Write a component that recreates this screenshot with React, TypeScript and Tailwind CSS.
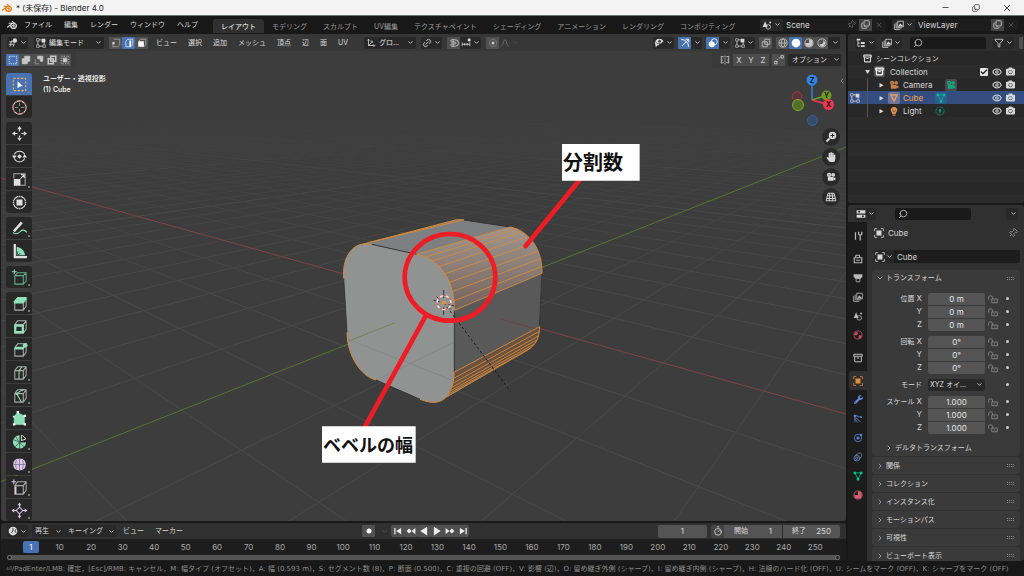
import type { ReactNode } from "react";
import {
  Archive, Check, ChevronDown, ChevronLeft, ChevronRight, Copy, Eye, Funnel, Link2,
  Magnet, Minus, Pin, Search, Timer, X,
} from "lucide-react";
import { FaCamera, FaHandPaper, FaWrench } from "react-icons/fa";
import { SiBlender } from "react-icons/si";

function Ico({ size = "size-[10px]", color = "", children }: { size?: string; color?: string; children: ReactNode }) {
  return (
    <svg viewBox="0 0 16 16" className={`${size} ${color} shrink-0`} fill="none" stroke="currentColor" strokeWidth="1.3">
      {children}
    </svg>
  );
}

const Down = ({ dim = false }: { dim?: boolean }) => (
  <ChevronDown className={`size-[7px] shrink-0 ${dim ? "text-[#555]" : "text-[#c8c8c8]"}`} strokeWidth={3} />
);

/* ---------- small icons ---------- */

const GridEditor = () => (
  <Ico><path d="M2 6h10M1 10h9M6 4 3 14M10 9l-2 5" /><circle cx="11" cy="4" r="3.5" fill="currentColor" stroke="none" /></Ico>
);
const EditMode = () => (
  <Ico>
    <path d="M3 5v6M5 13h6M13 7v4M5 3h4" />
    <path d="M1 1h4v4H1zM1 11h4v4H1zM11 11h4v4h-4z" strokeWidth="1" />
    <path d="M9 1h6v6H9z" fill="currentColor" stroke="none" />
  </Ico>
);
const ObjectMode = ({ color = "" }: { color?: string }) => (
  <Ico color={color}>
    <path d="M1 5V1h4M11 1h4v4M15 11v4h-4M5 15H1v-4" strokeWidth="1.2" />
    <path d="M4 4h8v8H4z" fill="currentColor" stroke="none" />
  </Ico>
);
const VertMode = () => (
  <Ico><path d="M5 2h9v9l-3 3H3V8" opacity=".7" /><circle cx="4" cy="8" r="2.2" fill="currentColor" stroke="none" /></Ico>
);
const EdgeMode = () => (
  <Ico><path d="M3 5l3-3h8v9l-3 3H3z" opacity=".8" /><path d="M10 4v10" strokeWidth="3" stroke="#fff" /></Ico>
);
const FaceMode = () => (
  <Ico><path d="M3 5l3-3h8v9l-3 3" opacity=".8" /><path d="M2 5h9v9H2z" fill="#fff" stroke="none" /></Ico>
);
const AxesIcon = () => (
  <Ico><path d="M4 12V2M2 4l2-2 2 2M4 12h10M12 10l2 2-2 2M4 12l6-6M7 5h3v3" /></Ico>
);
const Increment = () => (
  <Ico><path d="M2 7v6M14 7v6M2 10h12M6 8v4M10 8v4" /><circle cx="13" cy="3" r="2.5" fill="currentColor" stroke="none" /></Ico>
);
const Dot = () => <Ico><circle cx="8" cy="8" r="6" opacity=".4" /><circle cx="8" cy="8" r="2.4" fill="currentColor" stroke="none" /></Ico>;
const Falloff = () => <Ico><path d="M1 13c5 0 4-10 7-10s2 10 7 10" /></Ico>;
const VisIcon = () => (
  <Ico>
    <path d="M2 5c3-5 10-5 13 0-3 5-10 5-13 0z" fill="currentColor" stroke="none" />
    <circle cx="9" cy="5" r="2" fill="#333" stroke="none" />
    <path d="M1 6l8 5-4 1-2 3z" fill="currentColor" stroke="none" />
  </Ico>
);
const GizmoIcon = () => <Ico><path d="M2 2c7 1 11 5 12 12M3 13 14 2M9 2h5v5" strokeWidth="1.5" /></Ico>;
const Overlays = () => (
  <Ico><circle cx="6" cy="10" r="4.8" fill="currentColor" stroke="none" /><circle cx="10" cy="6" r="4.8" /></Ico>
);
const XRay = () => <Ico><path d="M2 6h8v8H2zM6 2h8v8H6z" /></Ico>;
const Wire = () => <Ico><circle cx="8" cy="8" r="6.5" /><ellipse cx="8" cy="8" rx="3" ry="6.5" /><path d="M2 8h12" /></Ico>;
const Solid = () => <Ico><circle cx="8" cy="8" r="7" fill="currentColor" stroke="none" /></Ico>;
const MatIcon = ({ color = "" }: { color?: string }) => (
  <Ico color={color}>
    <circle cx="8" cy="8" r="6.5" />
    <path d="M8 8V2a6 6 0 0 1 0 12 6 6 0 0 1-6-6zM8 8h6" fill="currentColor" stroke="none" />
  </Ico>
);
const Rendered = () => <Ico><circle cx="8" cy="8" r="6.5" /><path d="M4 10c5 1 7-3 6-7 6 4 2 11-2 11-2 0-4-2-4-4z" fill="currentColor" stroke="none" /></Ico>;
const SceneIcon = () => (
  <Ico><path d="M5 2l4 9H1z" fill="currentColor" stroke="none" /><circle cx="10" cy="11" r="3.6" /><circle cx="13" cy="4" r="1.6" fill="currentColor" stroke="none" /></Ico>
);
const Layers = () => (
  <Ico><path d="M1 6v9h9M3.500 4v8.500h9" /><path d="M6 2h9v9H6z" /><path d="M7 10l3-5 2 3 1-1 1 3z" fill="currentColor" stroke="none" /></Ico>
);
const Tree = () => (
  <Ico><path d="M3 4v9h4M3 8h4" /><path d="M1 1h6v3H1zM8 6.500h6v3H8zM8 11.500h6v3H8z" fill="currentColor" stroke="none" /></Ico>
);
const PropsIcon = () => (
  <Ico><path d="M1 2h14v5H1zM1 9h14v5H1z" fill="currentColor" stroke="none" /><circle cx="5" cy="4.500" r="1.600" fill="#222" stroke="none" /><circle cx="11" cy="11.500" r="1.600" fill="#222" stroke="none" /></Ico>
);
const MovieCam = ({ color = "" }: { color?: string }) => (
  <Ico color={color}>
    <circle cx="5" cy="4.500" r="3.500" fill="currentColor" stroke="none" /><circle cx="11.500" cy="4.500" r="3" fill="currentColor" stroke="none" />
    <path d="M3 8h9v6H3zM12 10l3-1.500v5L12 12z" fill="currentColor" stroke="none" />
    <circle cx="5" cy="4.500" r="1" fill="#333" stroke="none" />
  </Ico>
);
const MeshTri = ({ color = "" }: { color?: string }) => <Ico color={color}><path d="M3 3h10L8 13z" strokeWidth="2.4" /></Ico>;
const MeshData = ({ color = "" }: { color?: string }) => (
  <Ico color={color}><path d="M3 3h10L8 13z" /><path d="M1 1h4v4H1zM11 1h4v4h-4zM6 11h4v4H6z" fill="currentColor" stroke="none" /></Ico>
);
const Bulb = () => (
  <Ico color="text-[#d98a4e]"><path d="M8 1a5.500 5.500 0 0 1 3 10v2H5v-2A5.500 5.500 0 0 1 8 1zM6 14h4v1.500H6z" fill="currentColor" stroke="none" /><path d="M6 7l2 2 2-2" stroke="#4a3020" /></Ico>
);
const LightData = () => <Ico color="text-[#12a57c]"><circle cx="8" cy="8" r="6.500" strokeDasharray="3 1" /><path d="M8 5v7" /><circle cx="8" cy="7" r="2" fill="currentColor" stroke="none" /></Ico>;

/* ---------- viewport drawing ---------- */

// view set-up: azimuth, elevation, focal length in pixels, distance to the origin
const AZ = 0.7208;
const EL = 0.293;
const F = 590;
const DIST = 8.4;

function project(x: number, y: number) {
  const lat = x * Math.cos(AZ) + y * Math.sin(AZ);
  const into = -x * Math.sin(AZ) + y * Math.cos(AZ);
  const depth = DIST + into * Math.cos(EL);
  const up = into * Math.sin(EL);
  return [423 + (F * (lat + (27 * DIST) / F)) / depth, 278 - (F * (up - (26 * DIST) / F)) / depth];
}

function gridLines() {
  const out: { d: string; major: boolean }[] = [];
  const N = 60;
  for (let k = -N; k <= N; k++) {
    if (k === 0) continue;
    const xMax = Math.min(N, (DIST - 1 + k * Math.cos(AZ) * Math.cos(EL)) / (Math.sin(AZ) * Math.cos(EL)));
    if (xMax > -N) {
      const [a, b] = project(-N, k);
      const [c, e] = project(xMax, k);
      out.push({ d: `M${a} ${b}L${c} ${e}`, major: k % 10 === 0 });
    }
    const yMin = Math.max(-N, (1 - DIST + k * Math.sin(AZ) * Math.cos(EL)) / (Math.cos(AZ) * Math.cos(EL)));
    if (yMin < N) {
      const [a, b] = project(k, yMin);
      const [c, e] = project(k, N);
      out.push({ d: `M${a} ${b}L${c} ${e}`, major: k % 10 === 0 });
    }
  }
  return out;
}

const BEVEL_TOP = [
  [290, 373, 570, 291], [318, 381, 590, 297], [336, 394, 604, 306], [353, 411, 620, 321], [370, 433, 637, 341],
  [385, 458, 652, 364], [396, 485, 661, 386], [401, 513, 666, 409], [403, 541, 666, 430],
];
const BEVEL_BOTTOM = [
  [402, 727, 659, 590], [402, 745, 658, 604], [400, 759, 655, 618], [396, 772, 650, 630], [391, 783, 643, 642],
  [384, 793, 632, 654], [375, 803, 615, 665],
];
const FACE =
  "M155 343L130 342C95 345 66 385 71 445L81 607C82 680 125 740 168 750L300 808C350 828 380 815 395 772C401 755 402 745 402 727L403 541C404 440 350 385 290 373Z";

function Scene() {
  return (
    <svg viewBox="1 34 845 487" preserveAspectRatio="xMidYMid slice" className="absolute inset-0 size-full" fill="none">
      <defs>
        <linearGradient id="fade" x1="0" y1="100" x2="0" y2="300" gradientUnits="userSpaceOnUse">
          <stop offset="0" stopColor="#000" />
          <stop offset=".25" stopColor="#3a3a3a" />
          <stop offset="1" stopColor="#fff" />
        </linearGradient>
        <mask id="far" maskUnits="userSpaceOnUse" x="0" y="30" width="850" height="500">
          <rect x="0" y="30" width="850" height="500" fill="url(#fade)" />
        </mask>
        <linearGradient id="strip" x1="0" y1="0" x2="0" y2="1">
          <stop offset="0" stopColor="#a09690" />
          <stop offset="1" stopColor="#74625b" />
        </linearGradient>
      </defs>
      <g mask="url(#far)">
        {gridLines().map((l, i) => <path key={i} d={l.d} stroke={l.major ? "#545454" : "#4a4a4a"} strokeWidth={1} />)}
      </g>
      <path d="M0 178L846 414" stroke="#83404a" />
      <path d="M0 482L846 147" stroke="#587429" />

      <g transform="translate(320 130) scale(.33333)" strokeWidth="3" strokeLinejoin="round">
        <path d="M130 342L410 269L432 270L570 291L660 386L666 430L658 590L655 620L630 656L384 800L300 760L290 373Z" fill="#7d7f80" />
        <path d="M290 373L570 291C620 300 668 350 666 430L403 541C404 440 350 385 290 373Z" fill="url(#strip)" />
        <path d="M403 541L666 430L659 590L402 727Z" fill="#595959" />
        <path d="M402 727L659 590C657 625 650 645 620 662L370 805Z" fill="#69503f" />
        <path d={FACE} fill="#919392" />
        <path d="M81 635L225 578" stroke="#6f8550" />
        <path d="M545 568L660 600" stroke="#704047" />
        <path d="M84 628L400 752M180 745L402 636" stroke="#858786" />
        <path d="M155 343L290 373M432 270L570 291M71 445L81 607M168 750L300 808M403 541V727M666 430L658 590" stroke="#343434" />
        <g stroke="#d38b3c">
          {BEVEL_TOP.concat(BEVEL_BOTTOM).map(([a, b, c, d]) => <path key={`${a}-${b}`} d={`M${a} ${b}L${c} ${d}`} opacity=".9" />)}
          <path d="M71 445C66 385 95 345 130 342L155 343M130 342L410 269H432M145 338L425 271" />
          <path d="M81 607C82 680 125 740 168 750M300 808C350 828 380 815 395 772C401 755 402 745 402 727" />
          <path d="M403 541C404 440 350 385 290 373M570 291C620 300 668 350 666 430M659 590C657 625 650 645 615 665" />
        </g>
        <path d="M372 519L572 785" stroke="#1c1c1c" strokeDasharray="8 7" />
        <path d="M371 480v24M371 532v24M341 511l18 4M385 524l18 4M350 500l8 8M384 530l8 8" stroke="#333" />
        <circle cx="372" cy="518" r="21" stroke="#f0f0f0" strokeWidth="4" />
        <circle cx="372" cy="518" r="21" stroke="#e05050" strokeWidth="4" strokeDasharray="9 10" />
        <circle cx="372" cy="518" r="6" fill="#f09030" />

        <g stroke="#ee1c25" strokeWidth="14" strokeLinecap="round">
          <ellipse cx="390" cy="442" rx="136" ry="130" />
          <path d="M777 152L617 348M318 556L135 890" />
        </g>
        <path d="M726 42H959V152H726zM6 889H287V998H6z" fill="#fff" />
      </g>
      <g fill="#111" className="font-['Noto_Sans_CJK_JP',sans-serif] font-bold">
        <text x="563" y="170" className="text-[20px]">分割数</text>
        <text x="323" y="452" className="text-[18px]">ベベルの幅</text>
      </g>
    </svg>
  );
}

/* ---------- tool shelf ---------- */

const WHITE = "#e0e0e0";
const GREEN = "#8fe0b8";
const LILAC = "#dcc6ea";
const CUBE = <path d="M3 6h9v9H3zM3 6l3-4h9v9l-3 4M12 6l3-4" stroke="#aaa" />;

const TOOL_GROUPS: { name: string; more?: boolean; icon: ReactNode }[][] = [
  [
    { name: "Select Box", more: true, icon: <><path d="M1.500 1.500h13v13h-13z" stroke="#f0ad45" strokeDasharray="2.500 1.500" /><path d="M6 4.500v7.500l2.300-2 3.200-.5z" fill="#fff" stroke="none" /></> },
    { name: "Cursor", icon: <><circle cx="8" cy="8" r="7" stroke={WHITE} /><circle cx="8" cy="8" r="7" stroke="#d14848" strokeDasharray="2.700 2.800" /><path d="M8 3v3.500M8 9.500V13M3 8h3.500M9.500 8H13" stroke="#888" /></> },
  ],
  [
    { name: "Move", icon: <path d="M8 0l2.400 3.400H5.600zM8 16l2.400-3.400H5.600zM0 8l3.400-2.400v4.800zM16 8l-3.400-2.400v4.800zM7.400 3h1.200v3H7.400zM7.400 10h1.200v3H7.400zM3 7.400h3v1.200H3zM10 7.400h3v1.200h-3z" fill={WHITE} stroke="none" /> },
    { name: "Rotate", icon: <><path d="M2.500 6a6 6 0 0 1 11 0M13.500 10a6 6 0 0 1-11 0" stroke={WHITE} /><path d="M8 5.500L10.500 8 8 10.500 5.500 8zM0 7h5L2.500 10.500zM11 9h5l-2.500-3.500z" fill={WHITE} stroke="none" /></> },
    { name: "Scale", more: true, icon: <><path d="M2 7V2h12v12H9" stroke="#aaa" /><path d="M2 7.500h7v7H2z" fill={WHITE} stroke="none" /><path d="M9 7l4-4M9.500 3H13v3.500" stroke={WHITE} /></> },
    { name: "Transform", icon: <><circle cx="8" cy="8" r="6.500" stroke={WHITE} /><path d="M4.800 4.800h6.400v6.400H4.800z" fill={WHITE} stroke="none" /><path d="M8 0l1.500 2.500h-3zM8 16l1.500-2.500h-3zM0 8l2.500-1.500v3zM16 8l-2.500-1.500v3z" fill={WHITE} stroke="#282828" strokeWidth=".6" /></> },
  ],
  [
    { name: "Annotate", more: true, icon: <><path d="M2 11L10.500 1.500" stroke={WHITE} strokeWidth="2.600" /><path d="M1 12c3 3 6 1 8-1s4-2 7 1" stroke={GREEN} /></> },
    { name: "Measure", icon: <><path d="M5 3a11 11 0 0 1 9 9H5z" fill={GREEN} stroke="none" /><path d="M3 0v14M2 14h14" stroke={WHITE} strokeWidth="2.400" /><path d="M6 8v3M9 10l-3 2" stroke="#456" /></> },
  ],
  [{ name: "Add Cube", more: true, icon: <><path d="M3 6h9v9H3zM3 6l3-3h9v9l-3 3M12 6l3-3" stroke="#5fae88" /><path d="M2.500-.5v5M0 2h5" stroke={GREEN} /></> }],
  [
    { name: "Extrude Region", more: true, icon: <>{CUBE}<path d="M2 5.500L6 1h9.500v3L12 8H2z" fill={GREEN} stroke="none" /></> },
    { name: "Inset Faces", icon: <>{CUBE}<path d="M3.500 7h8v7h-8z" stroke={GREEN} strokeWidth="2.400" /></> },
    { name: "Bevel", icon: <>{CUBE}<path d="M2 8l2-3h10l-2 3z" fill={GREEN} stroke="none" /><circle cx="14" cy="3.500" r="2.500" fill={GREEN} stroke="none" /></> },
    { name: "Loop Cut", more: true, icon: <>{CUBE}<path d="M7.500 15V6l3-4" stroke={GREEN} /></> },
    { name: "Knife", more: true, icon: <>{CUBE}<path d="M10 15L5 6l6-4" stroke={GREEN} /><path d="M4 5h2.500v2.500H4zM10 1h2v2h-2z" fill={GREEN} stroke="none" /></> },
    { name: "Poly Build", icon: <><path d="M2.500 14V6L6 2l7 3.500V14z" fill={GREEN} stroke={GREEN} /><path d="M1 13h2.500v2.500H1zM12.500 13H15v2.500h-2.500zM12.500 4H15v2.500h-2.500zM5 0h2.500v2.500H5zM1 5h2v2H1z" fill="#fff" stroke="none" /></> },
    { name: "Spin", more: true, icon: <><path d="M8 9V1.500A7 7 0 1 0 15 9z" fill={GREEN} stroke="none" /><path d="M8 9L2 6M8 9l-5 5M8 9v7M8 9l5 5M8 9L4 3" stroke="#2a4a3a" strokeWidth=".8" /><path d="M10 7V1.500c2 .5 4 2 4.500 4z" stroke={WHITE} strokeWidth="1" /></> },
    { name: "Smooth", more: true, icon: <><rect x="1.500" y="2" width="13" height="12" rx="5" fill={LILAC} stroke="none" /><path d="M8 2v12M2 8h12M5 3c-1.500 3-1.500 7 0 10M11 3c1.500 3 1.500 7 0 10" stroke="#7d6a8c" strokeWidth=".8" /></> },
    { name: "Edge Slide", more: true, icon: <>{CUBE}<path d="M4 15V7" stroke={LILAC} strokeWidth="1.600" /><path d="M2-.5v5M-.5 2h5" stroke={LILAC} /></> },
    { name: "Shrink/Fatten", more: true, icon: <><path d="M8-.5l2 3H6zM8 16.500l2-3H6zM-.5 8l3-2v4zM16.500 8l-3-2v4z" fill={LILAC} stroke="none" /><path d="M8 4.500L11.500 8 8 11.500 4.500 8zM8 2v3M8 11v3M2 8h3M11 8h3" stroke={LILAC} /></> },
  ],
];

function ToolShelf() {
  return (
    <div className="flex w-[26px] flex-col gap-1">
      {TOOL_GROUPS.map((group, g) => (
        <div key={g} className="flex flex-col gap-px overflow-hidden rounded-[3px]">
          {group.map((tool) => (
            <button
              key={tool.name}
              aria-label={tool.name}
              className={`relative flex h-[22px] items-center justify-center ${tool.name === "Select Box" ? "bg-[#4772b3]" : "bg-[#282828]"}`}
            >
              <svg viewBox="-1 -1 18 18" className="size-[17px]" fill="none" strokeWidth="1.100">{tool.icon}</svg>
              {tool.more && <span className="absolute right-[2px] bottom-[2px] size-[2px] bg-[#777]" />}
            </button>
          ))}
        </div>
      ))}
    </div>
  );
}

function Gizmo() {
  return (
    <svg viewBox="786 73 52 53" className="h-[53px] w-[52px] font-['Inter',sans-serif] text-[7px] font-bold" fill="none">
      <circle cx="797" cy="96.500" r="4.800" fill="#5a3439" stroke="#a03a48" />
      <circle cx="812.500" cy="120.500" r="5" fill="#354d6b" stroke="#3565a0" />
      <path d="M812 100V82" stroke="#3581e0" strokeWidth="1.500" />
      <path d="M812 100l14-4.500" stroke="#72a31b" strokeWidth="1.500" />
      <path d="M812 100l16 4.500" stroke="#f33650" strokeWidth="1.500" />
      <circle cx="812" cy="80" r="5.500" fill="#2f83e3" />
      <circle cx="826.500" cy="95.500" r="5" fill="#6f9c1e" />
      <circle cx="828.500" cy="104.500" r="5.500" fill="#f33650" />
      <circle cx="798" cy="105" r="5.500" fill="#526e2a" stroke="#7fb020" />
      <g fill="#111" textAnchor="middle">
        <text x="812" y="82.500">Z</text>
        <text x="826.500" y="98">Y</text>
        <text x="828.500" y="107">X</text>
      </g>
    </svg>
  );
}

/* ---------- bars ---------- */

function Drop({ label, children, dim }: { label: string; children: ReactNode; dim?: boolean }) {
  return (
    <button aria-label={label} className={`flex h-3 shrink-0 items-center gap-[2px] rounded-[2px] px-[1px] ${dim ? "text-[#777]" : "bg-[#282828]"}`}>
      {children}
      <Down dim={dim} />
    </button>
  );
}

function Toggle({ label, on, children }: { label: string; on?: boolean; children: ReactNode }) {
  return (
    <button
      aria-label={label}
      className={`flex h-3 w-[13px] shrink-0 items-center justify-center rounded-[1px] ${on ? "bg-[#4772b3] text-white" : "bg-[#505050] text-[#c8c8c8]"}`}
    >
      {children}
    </button>
  );
}

function Pick({ label, value, width, icon }: { label: string; value: string; width: string; icon?: ReactNode }) {
  return (
    <span className={`flex h-3 ${width} shrink-0 items-center gap-[3px] rounded-[2px] bg-[#282828] px-[2px]`}>
      {icon}
      <select aria-label={label} className="min-w-0 flex-1 appearance-none bg-transparent p-0 leading-3 text-[#e0e0e0] outline-none">
        <option>{value}</option>
      </select>
      <Down />
    </span>
  );
}

const WORKSPACES = ["レイアウト", "モデリング", "スカルプト", "UV編集", "テクスチャペイント", "シェーディング", "アニメーション", "レンダリング", "コンポジティング"];

function DataBlock({ name, icon, pin }: { name: string; icon: ReactNode; pin?: boolean }) {
  return (
    <div className="flex h-3 w-[126px] items-center overflow-hidden rounded-[2px] bg-[#1d1d1d]">
      <button aria-label={`${name} list`} className="flex h-3 items-center gap-[2px] bg-[#282828] px-[2px]">{icon}<Down /></button>
      <input aria-label={name} defaultValue={name} className="min-w-0 flex-1 bg-transparent px-[3px] text-[8px] outline-none" />
      {pin && <Pin className="mr-[3px] size-[9px] shrink-0 rotate-45 text-[#777]" />}
      <button aria-label={`Copy ${name}`} className="flex h-3 w-[13px] items-center justify-center bg-[#444]"><Copy className="size-[9px] -scale-y-100" /></button>
      <button aria-label={`Remove ${name}`} className="flex h-3 w-[14px] items-center justify-center text-[#666]"><X className="size-2" /></button>
    </div>
  );
}

function TopBar() {
  return (
    <div className="flex h-[17px] shrink-0 items-center pl-[7px] pr-[6px]">
      <SiBlender className="mr-[7px] size-[10px]" />
      <nav className="flex gap-3">
        {["ファイル", "編集", "レンダー", "ウィンドウ", "ヘルプ"].map((m) => <button key={m}>{m}</button>)}
      </nav>
      <div role="tablist" className="ml-[15px] flex h-full items-end">
        {WORKSPACES.map((w, i) => (
          <button
            key={w}
            role="tab"
            aria-selected={i === 0}
            className={`h-[14px] rounded-t-[3px] px-2 pt-[2px] ${i === 0 ? "bg-[#303030] text-white" : "text-[#989898]"}`}
          >
            {w}
          </button>
        ))}
      </div>
      <div className="ml-auto flex gap-[6px]">
        <DataBlock name="Scene" icon={<SceneIcon />} pin />
        <DataBlock name="ViewLayer" icon={<Layers />} />
      </div>
    </div>
  );
}

function ViewportHeader() {
  return (
    <div className="relative">
      <div className="flex h-[17px] items-center bg-[#373737] px-[6px]">
        <Drop label="Editor type"><GridEditor /></Drop>
        <div className="ml-[6px] flex items-center gap-[5px]">
          <Pick label="Mode" value="編集モード" width="w-[70px]" icon={<EditMode />} />
          <div className="flex">
            <Toggle label="Vertex"><VertMode /></Toggle>
            <Toggle label="Edge" on><EdgeMode /></Toggle>
            <Toggle label="Face"><FaceMode /></Toggle>
          </div>
        </div>
        <nav className="ml-2 flex gap-[11px]">
          {["ビュー", "選択", "追加", "メッシュ", "頂点", "辺", "面", "UV"].map((m) => <button key={m}>{m}</button>)}
        </nav>
        <div className="ml-4 flex items-center gap-[5px]">
          <Pick label="Orientation" value="グロ..." width="w-[52px]" icon={<AxesIcon />} />
          <Drop label="Pivot"><Link2 className="size-[10px] -rotate-45" /></Drop>
          <div className="flex">
            <Toggle label="Snap"><Magnet className="size-[10px] rotate-45" /></Toggle>
            <Drop label="Snap to"><Increment /></Drop>
          </div>
          <div className="flex">
            <Toggle label="Proportional"><Dot /></Toggle>
            <Drop label="Falloff" dim><Falloff /></Drop>
          </div>
        </div>
        <div className="ml-auto flex items-center gap-1">
          <Drop label="Visibility"><VisIcon /></Drop>
          <div className="flex"><Toggle label="Gizmos" on><GizmoIcon /></Toggle><Drop label="Gizmo options"><i /></Drop></div>
          <div className="flex"><Toggle label="Overlays" on><Overlays /></Toggle><Drop label="Overlay options"><i /></Drop></div>
          <Drop label="Mesh overlays"><EditMode /></Drop>
          <Toggle label="X-Ray"><XRay /></Toggle>
          <div className="flex">
            <Toggle label="Wireframe"><Wire /></Toggle>
            <Toggle label="Solid" on><Solid /></Toggle>
            <Toggle label="Material"><MatIcon /></Toggle>
            <Toggle label="Rendered"><Rendered /></Toggle>
            <Drop label="Shading"><i className="w-px" /></Drop>
          </div>
        </div>
      </div>
      <div className="flex h-[17px] items-center justify-between">
        <div className="flex h-full items-center rounded-br-[3px] bg-[#393939] pl-[5px] pr-[5px]">
          {[
            <path key="0" d="M2 2h12v12H2z" strokeDasharray="2 1.500" />,
            <path key="1" d="M2 6h4V2h8v8h-4v4H2z" fill="currentColor" />,
            <g key="2"><path d="M6 2h8v8h-4V6H6z" fill="currentColor" /><path d="M2 7v7h7" strokeDasharray="2 1.500" /></g>,
            <path key="3" d="M2 6h8v8H2zM6 2h8v8H6z" strokeWidth="2.400" />,
            <g key="4"><path d="M2 2h12v12H2z" strokeDasharray="2 2" /><path d="M5 5h6v6H5z" fill="currentColor" /></g>,
          ].map((d, i) => (
            <Toggle key={i} label={`Select mode ${i + 1}`} on={i === 0}><Ico>{d}</Ico></Toggle>
          ))}
        </div>
        <div className="flex h-full items-center gap-[3px] bg-[#393939] pl-2 pr-[5px]">
          <Ico><path d="M8 1v14" strokeDasharray="2 1" /><path d="M6 3L2 2v5l2 1-2 1v4l4-1M10 3l4-1v5l-2 1 2 1v4l-4-1" /></Ico>
          <div className="flex">
            {["X", "Y", "Z"].map((a) => (
              <button key={a} className="h-3 w-3 bg-[#4c4c4c] text-[8px]">{a}</button>
            ))}
          </div>
          <Toggle label="Auto merge"><Ico><path d="M4 12C4 7 7 4 12 4" strokeDasharray="2 2" /><path d="M1 10h4v4H1zM11 1h4v4h-4z" /></Ico></Toggle>
          <Drop label="オプション"><span className="pl-[3px] pr-1">オプション</span></Drop>
        </div>
      </div>
    </div>
  );
}

const NAV: { name: string; icon: ReactNode }[] = [
  { name: "Zoom", icon: <Ico size="size-3"><circle cx="10" cy="6" r="5" fill="currentColor" stroke="none" /><path d="M6 10l-4 4" strokeWidth="2.500" /><path d="M10 3.500v5M7.500 6h5" stroke="#222" /></Ico> },
  { name: "Pan", icon: <FaHandPaper className="size-[10px]" /> },
  { name: "Camera view", icon: <MovieCam /> },
  { name: "Perspective", icon: <Ico size="size-3"><path d="M4 3h8l2.500 10h-13zM3 6.500h10M2.500 10h11M6.500 3L5.500 13M9.500 3l1 10" /></Ico> },
];

function Viewport() {
  return (
    <section className="relative flex min-h-0 flex-1 flex-col overflow-hidden rounded-[3px] bg-[#3d3d3d]">
      <Scene />
      <ViewportHeader />
      <div className="relative flex flex-1 items-start pl-[5px] pt-[5px]">
        <ToolShelf />
        <div className="ml-[11px] font-medium leading-[11px] text-white">
          <p>ユーザー・透視投影</p>
          <p>(1) Cube</p>
        </div>
        <div className="ml-auto flex flex-col items-end gap-[2px]">
          <div className="flex items-start">
            <Gizmo />
            <ChevronLeft className="mt-1 size-[8px] text-[#aaa]" />
          </div>
          {NAV.map((n) => (
            <button key={n.name} aria-label={n.name} className="mr-[6px] flex size-[18px] items-center justify-center rounded-full bg-[#2a2a2a]">
              {n.icon}
            </button>
          ))}
        </div>
      </div>
    </section>
  );
}

const PLAY = [
  ["Jump to start", "M2 3h2v10H2zM13 3v10L5 8z"],
  ["Previous keyframe", "M5 4l4 4-4 4-4-4zM15 3v10L9 8z"],
  ["Play reverse", "M13 1v14L2 8z"],
  ["Play", "M3 1v14l11-7z"],
  ["Next keyframe", "M11 4l4 4-4 4-4-4zM1 3v10l6-5z"],
  ["Jump to end", "M12 3h2v10h-2zM3 3v10l8-5z"],
];

function Timeline() {
  const frames = Array.from({ length: 25 }, (_, i) => (i + 1) * 10);
  return (
    <section className="flex shrink-0 flex-col overflow-hidden rounded-[3px] bg-[#1d1d1d]">
      <div className="flex h-4 items-center bg-[#303030] px-[6px]">
        <div className="flex flex-1 items-center">
          <Drop label="Timeline editor"><Ico><circle cx="8" cy="8" r="7" fill="currentColor" stroke="none" /><path d="M8 3v5l-3 3M13 5l-2 3 2 3" stroke="#222" /></Ico></Drop>
          <div className="ml-1 flex">
            <Drop label="再生"><span className="pl-[2px] pr-1">再生</span></Drop>
            <Drop label="キーイング"><span className="pl-1 pr-[3px]">キーイング</span></Drop>
          </div>
          <button className="ml-[7px]">ビュー</button>
          <button className="ml-[11px]">マーカー</button>
        </div>
        <div className="mr-4 flex items-center">
          <Toggle label="Auto keying"><Ico><circle cx="8" cy="8" r="4" fill="#fff" stroke="none" /></Ico></Toggle>
          <Drop label="Keying options" dim><i className="w-[3px]" /></Drop>
          <div className="ml-[2px] flex overflow-hidden rounded-[2px]">
            {PLAY.map(([name, d]) => (
              <Toggle key={name} label={name}><Ico><path d={d} fill="#eee" stroke="none" /></Ico></Toggle>
            ))}
          </div>
        </div>
        <div className="flex flex-1 items-center justify-end text-[8px]">
          <input aria-label="Frame" defaultValue="1" className="h-[13px] w-[49px] rounded-[2px] bg-[#545454] text-center" />
          <button aria-label="Preview range" className="ml-1 flex h-[13px] w-[13px] items-center justify-center rounded-l-[2px] bg-[#444]"><Timer className="size-[10px]" /></button>
          <label className="flex h-[13px] w-[58px] items-center bg-[#545454] px-[10px]">
            <span className="shrink-0 text-[7px]">開始</span>
            <input defaultValue="1" className="w-full min-w-0 text-right" />
          </label>
          <label className="ml-px flex h-[13px] w-[57px] items-center rounded-r-[2px] bg-[#545454] px-[9px]">
            <span className="shrink-0 text-[7px]">終了</span>
            <input defaultValue="250" className="w-full min-w-0 text-right" />
          </label>
        </div>
      </div>
      <div className="flex h-4 items-center pl-[22px] pr-[15px] text-[8px] text-[#a8a8a8]">
        <span className="mr-[5px] h-3 w-4 rounded-[2px] bg-[#4772b3] text-center leading-3 text-white">1</span>
        <div className="grid flex-1 grid-cols-25 text-center">
          {frames.map((f) => <span key={f}>{f}</span>)}
        </div>
      </div>
      <div className="h-[6px] px-[6px]"><div className="flex h-[5px] justify-between rounded-full bg-[#545454]"><i className="size-[5px] rounded-full border border-[#777] bg-[#222]" /><i className="size-[5px] rounded-full border border-[#777] bg-[#222]" /></div></div>
    </section>
  );
}

/* ---------- outliner ---------- */

function SearchBox({ label }: { label: string }) {
  return (
    <label className="flex h-3 w-[76px] items-center rounded-[2px] bg-[#1a1a1a] pl-[3px]">
      <Search className="size-[10px] shrink-0 -scale-x-100 text-[#c8c8c8]" />
      <input type="search" aria-label={label} className="w-full min-w-0 bg-transparent outline-none" />
    </label>
  );
}

const OBJECTS = [
  { name: "Camera", icon: <MovieCam color="text-[#c97f48]" />, data: <MovieCam color="text-[#12a57c]" />, box: true },
  { name: "Cube", icon: <MeshTri color="text-[#e59a6c]" />, data: <MeshData color="text-[#10b5a0]" />, box: true },
  { name: "Light", icon: <Bulb />, data: <LightData />, box: false },
];

const RowEnd = () => (
  <>
    <button aria-label="Hide"><Eye className="size-[10px]" strokeWidth={2.5} /></button>
    <button aria-label="Disable in render" className="ml-1"><FaCamera className="size-[9px]" /></button>
  </>
);

function Outliner() {
  return (
    <section className="flex h-[169px] shrink-0 flex-col overflow-hidden rounded-[3px] bg-[#282828]">
      <div className="flex h-[17px] shrink-0 items-center bg-[#2e2e2e] pl-[7px] pr-[1px]">
        <Drop label="Outliner editor"><Tree /></Drop>
        <div className="ml-[5px]"><Drop label="Display mode"><Layers /></Drop></div>
        <div className="mx-auto"><SearchBox label="Filter outliner" /></div>
        <Drop label="Filter"><Funnel className="size-[10px]" /></Drop>
        <span className="ml-[5px] h-3 w-1 rounded-l-[2px] bg-[#505050]" />
      </div>
      <div className="mt-px flex h-[13px] shrink-0 items-center pl-[15px]">
        <Archive className="mr-1 size-[9px]" strokeWidth={3} />シーンコレクション
      </div>
      <div className="flex h-[13px] shrink-0 items-center bg-[#2b2b2b] pl-[17px] pr-[9px]">
        <span className="w-[9px] text-[5px]">▼</span>
        <span className="mr-[5px] flex size-[11px] items-center justify-center rounded-[2px] bg-[#555]"><Archive className="size-[9px] text-white" strokeWidth={3} /></span>
        <span className="flex-1 text-[8px]">Collection</span>
        <label className="relative mr-1 flex size-[8px] items-center">
          <input type="checkbox" defaultChecked aria-label="Include collection" className="size-[8px] appearance-none rounded-[1px] bg-[#e6e6e6]" />
          <Check className="pointer-events-none absolute inset-0 size-[8px] text-[#222]" strokeWidth={4} />
        </label>
        <RowEnd />
      </div>
      {OBJECTS.map((o, i) => (
        <div key={o.name} className={`flex h-[13px] shrink-0 items-center pl-[2px] pr-[9px] ${o.name === "Cube" ? "bg-[#334d80]" : i % 2 ? "bg-[#2b2b2b]" : ""}`}>
          <span className="w-[17px]">{o.name === "Cube" && <EditMode />}</span>
          <span className="h-full w-[12px] border-l border-[#555]" />
          <span className="w-[9px] text-[5px]">▶</span>
          <span className={`mr-[3px] flex size-3 items-center justify-center rounded-[2px] ${o.name === "Cube" ? "bg-[#6c7797]" : ""}`}>{o.icon}</span>
          <span className={`text-[8px] ${o.name === "Cube" ? "text-[#f0a345]" : ""}`}>{o.name}</span>
          <span className={`ml-3 flex size-3 items-center justify-center rounded-[2px] ${o.name === "Cube" ? "bg-[#28608a]" : o.box ? "bg-[#4a4a4a]" : ""}`}>{o.data}</span>
          <span className="flex-1" />
          <RowEnd />
        </div>
      ))}
      {[0, 1, 2, 3, 4, 5, 6].map((i) => <div key={i} className={`h-[13px] shrink-0 ${i % 2 ? "" : "bg-[#2b2b2b]"}`} />)}
    </section>
  );
}

/* ---------- properties ---------- */

const TABS: { name: string; gap?: boolean; color?: string; icon: ReactNode }[] = [
  { name: "Tool", icon: <Ico><path d="M4 2v6M4 8v6" strokeWidth="2" /><path d="M9 1v4l2.500 2L14 5V1M11.500 7v8" strokeWidth="2" /></Ico> },
  { name: "Render", gap: true, icon: <Ico><path d="M2 6h12v8H2zM4 5l1-3h5l1 3M5 10h6" strokeWidth="1.800" /></Ico> },
  { name: "Output", icon: <Ico><path d="M1 2h14v5h-2v2H3V7H1z" fill="currentColor" stroke="none" /><path d="M5 9h6v5H5z" /></Ico> },
  { name: "View layer", icon: <Layers /> },
  { name: "Scene", icon: <SceneIcon /> },
  { name: "World", color: "text-[#c8505c]", icon: <Ico><circle cx="8" cy="8" r="6.500" /><path d="M4 3c4 0 5 2 3 4s-3 1-5 1zM9 9c3-1 5 0 5 1s-3 4-5 4z" fill="currentColor" stroke="none" /></Ico> },
  { name: "Collection", gap: true, icon: <Archive className="size-[10px]" strokeWidth={2.5} /> },
  { name: "Object", gap: true, color: "text-[#e58b3c]", icon: <ObjectMode /> },
  { name: "Modifiers", color: "text-[#5a86d8]", icon: <FaWrench className="size-[9px]" /> },
  { name: "Particles", color: "text-[#5a86d8]", icon: <Ico><path d="M3 2v11M3 2l10 3M3 4l9 9M3 8l5 6" /><circle cx="3" cy="3" r="2" fill="currentColor" stroke="none" /><circle cx="13" cy="5" r="1.500" fill="currentColor" stroke="none" /></Ico> },
  { name: "Physics", color: "text-[#5a86d8]", icon: <Ico><circle cx="8" cy="8" r="6" /><circle cx="8" cy="8" r="2.500" fill="currentColor" stroke="none" /><circle cx="13" cy="3" r="1.800" fill="currentColor" stroke="none" /></Ico> },
  { name: "Constraints", color: "text-[#6a93c8]", icon: <Ico><circle cx="6" cy="10" r="4.500" /><circle cx="6" cy="10" r="1.800" /><path d="M3 6l6-4c3-2 7 2 4 6l-3 4" /></Ico> },
  { name: "Data", color: "text-[#00c58a]", icon: <MeshData /> },
  { name: "Material", color: "text-[#d0606c]", icon: <MatIcon /> },
];

const Grip = () => (
  <span className="ml-auto mr-[2px] grid grid-cols-4 gap-px">
    {[0, 1, 2, 3, 4, 5, 6, 7].map((i) => <i key={i} className="size-px bg-[#888]" />)}
  </span>
);

function Fields({ label, values }: { label: string; values: string[] }) {
  return (
    <div className="flex flex-col">
      {["X", "Y", "Z"].map((axis, i) => (
        <div key={axis} className="flex h-[13px] items-center">
          <span className="mr-[6px] flex-1 text-right">{i === 0 && `${label} `}<span className="text-[8px]">{axis}</span></span>
          <input
            aria-label={`${label} ${axis}`}
            defaultValue={values[i]}
            className={`h-3 w-[57px] bg-[#545454] text-center text-[8px] text-[#e8e8e8] ${i === 0 ? "rounded-t-[2px]" : i === 2 ? "rounded-b-[2px]" : ""}`}
          />
          <button aria-label={`Lock ${label} ${axis}`} className="ml-[3px] text-[#909090]">
            <Ico><path d="M1 9V5c0-3 6-3 6 0v3M6 8h9v6H6zM10.500 10v2" /></Ico>
          </button>
          <span className="ml-2 mr-[11px] size-[3px] rounded-full bg-[#ccc]" />
        </div>
      ))}
    </div>
  );
}

function Properties() {
  return (
    <section className="flex min-h-0 flex-1 flex-col overflow-hidden rounded-[3px] bg-[#303030]">
      <div className="flex h-[17px] shrink-0 items-center pl-[7px] pr-[6px]">
        <Drop label="Properties editor"><PropsIcon /></Drop>
        <div className="ml-[19px] flex-1"><SearchBox label="Search properties" /></div>
        <Drop label="Options"><i className="w-px" /></Drop>
      </div>
      <div className="flex min-h-0 flex-1">
        <div role="tablist" className="flex w-[19px] shrink-0 flex-col items-end bg-[#1c1c1c] pt-1">
          {TABS.map((t) => (
            <button
              key={t.name}
              role="tab"
              aria-label={t.name}
              aria-selected={t.name === "Object"}
              className={`flex h-[19px] w-[18px] shrink-0 items-center justify-center rounded-l-[3px] ${t.gap ? "mt-1" : ""} ${t.color ?? "text-[#b8b8b8]"} ${t.name === "Object" ? "bg-[#303030]" : ""}`}
            >
              {t.icon}
            </button>
          ))}
        </div>
        <div className="flex min-w-0 flex-1 flex-col pl-[5px] pr-1">
          <div className="flex h-[22px] shrink-0 items-center px-[2px]">
            <ObjectMode /><span className="ml-1 flex-1 text-[8px]">Cube</span>
            <Pin className="size-[10px] rotate-45 text-[#999]" />
          </div>
          <div className="mt-[6px] flex h-[13px] shrink-0 items-center pl-[2px]">
            <button aria-label="Object list" className="flex h-[13px] items-center gap-px rounded-l-[2px] bg-[#282828] px-px"><ObjectMode /><Down /></button>
            <input aria-label="Object name" defaultValue="Cube" className="h-[13px] min-w-0 flex-1 rounded-r-[2px] bg-[#1d1d1d] px-[3px] text-[8px]" />
          </div>
          <div className="mt-[7px] shrink-0 rounded-[3px] bg-[#3a3a3a]">
            <div className="flex h-4 items-center px-1">
              <ChevronDown className="mr-[2px] size-2 text-[#aaa]" strokeWidth={2.5} />トランスフォーム<Grip />
            </div>
            <div className="mt-[6px] flex flex-col gap-1">
              <Fields label="位置" values={["0 m", "0 m", "0 m"]} />
              <Fields label="回転" values={["0°", "0°", "0°"]} />
              <div className="flex h-[13px] items-center">
                <span className="mr-[6px] flex-1 text-right">モード</span>
                <Pick label="モード" value="XYZ オイ..." width="w-[57px]" />
                <span className="ml-[21px] mr-[11px] size-[3px] rounded-full bg-[#ccc]" />
              </div>
              <Fields label="スケール" values={["1.000", "1.000", "1.000"]} />
            </div>
            <button className="mt-[5px] flex h-[17px] items-center pl-[13px]">
              <ChevronRight className="mr-[2px] size-2 text-[#aaa]" strokeWidth={2.5} />デルタトランスフォーム
            </button>
          </div>
          {["関係", "コレクション", "インスタンス化", "モーションパス", "可視性", "ビューポート表示"].map((p) => (
            <div key={p} className="mt-px flex h-[17px] shrink-0 items-center rounded-[3px] bg-[#3a3a3a] px-1">
              <button className="flex items-center"><ChevronRight className="mr-[2px] size-2 text-[#aaa]" strokeWidth={2.5} />{p}</button>
              <Grip />
            </div>
          ))}
        </div>
      </div>
    </section>
  );
}

const STATUS =
  "⏎/PadEnter/LMB: 確定，[Esc]/RMB: キャンセル，M: 幅タイプ (オフセット)，A: 幅 (0.593 m)，S: セグメント数 (8)，P: 断面 (0.500)，C: 重複の回避 (OFF)，V: 影響 (辺)，O: 留め継ぎ外側 (シャープ)，I: 留め継ぎ内側 (シャープ)，H: 法線のハード化 (OFF)，U: シームをマーク (OFF)，K: シャープをマーク (OFF)";

export default function App() {
  return (
    <div className="flex h-screen flex-col overflow-hidden bg-[#181818] font-['Inter','Noto_Sans_CJK_JP',sans-serif] text-[7px] leading-[10px] whitespace-nowrap text-[#d8d8d8]">
      <header className="flex h-4 shrink-0 items-center border-b border-[#6a7570] bg-[#f3f3f3] pl-[2px] pr-3 text-[#222]">
        <SiBlender className="mr-1 size-[10px] text-[#e87d0d]" />
        <h1 className="flex-1 text-[8px]">* (未保存) - Blender 4.0</h1>
        <div className="flex gap-[22px]">
          <button aria-label="Minimize"><Minus className="size-[9px]" /></button>
          <button aria-label="Restore"><Copy className="size-[8px] -scale-y-100" /></button>
          <button aria-label="Close"><X className="size-[10px]" /></button>
        </div>
      </header>
      <TopBar />
      <main className="flex min-h-0 flex-1 gap-[2px] pl-px pt-px">
        <div className="flex min-w-0 flex-1 flex-col gap-[2px]">
          <Viewport />
          <Timeline />
        </div>
        <aside className="flex w-44 shrink-0 flex-col gap-[2px]">
          <Outliner />
          <Properties />
        </aside>
      </main>
      <footer className="h-[15px] shrink-0 overflow-hidden pl-[6px] font-['DejaVu_Sans','Noto_Sans_CJK_JP',sans-serif] leading-[16px] text-[#8c8c8c]">{STATUS}</footer>
    </div>
  );
}
